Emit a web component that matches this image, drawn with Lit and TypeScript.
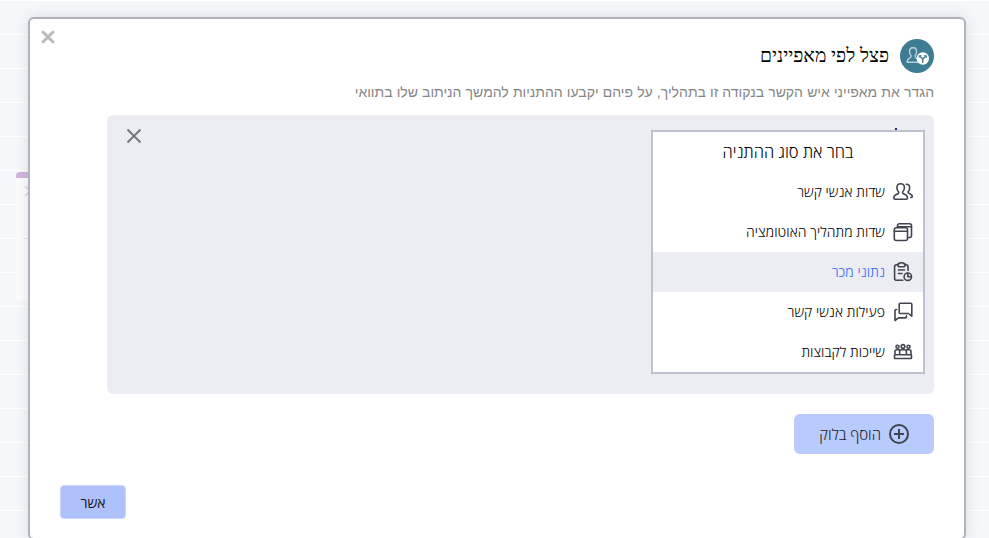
import { LitElement, html, css, svg } from "lit";
import { customElement, state } from "lit/decorators.js";
import { classMap } from "lit/directives/class-map.js";

const contacts = svg`<path d="M7.6 1.800c-2.300 0-3.700 1.600-3.700 3.900 0 1.600.6 3.100 1.600 4.100.4.800.2 1.600-.6 2L2.400 13C1 13.700.8 15 .9 16.300c0 .6.4.9 1 .9h11.600c.6 0 1-.3 1-.9 0-1.300-.2-2.600-1.600-3.300l-2.500-1.200c-.8-.4-1-1.200-.6-2 1-1 1.600-2.500 1.600-4.100 0-2.300-1.400-3.900-3.800-3.900z"/><path d="M13.200 2.200c2.200-.2 3.500 1.400 3.500 3.600 0 1.500-.5 2.800-1.400 3.700-.4.7-.2 1.300.4 1.700l2 1.100c1.200.6 1.600 1.300 1.600 2.500-.2.500-.9.700-1.700.7"/>`;
const windows = svg`<rect x="1.300" y="5.700" width="13.200" height="12.800" rx="2"/><path d="M1.300 9.200h13.200M4.500 5.500V3.800c0-1.200.8-2 2-2h10c1.200 0 2 .8 2 2v9.700c0 1.200-.8 2-2 2h-1.800M5 4.800h13"/>`;
const clipboard = svg`<path d="M5 2.800H3.600c-1.200 0-2 .8-2 2v11.400c0 1.200.8 2 2 2h6.200M12 2.800h1c1.200 0 2 .8 2 2V8.500"/><path d="M6 1.800c.4-1.500 4.500-1.500 5 0h1v2c0 .7-.4 1-1 1H6c-.6 0-1-.3-1-1v-2zM5.500 8h6M5.500 11.500h3.500"/><circle cx="14.800" cy="14.700" r="3.700"/><path d="M14.800 11.200v3.500h3.500"/>`;
const chat = svg`<path d="M7.200 1.200h10.600c.6 0 1 .4 1 1v12l-3.300-2.700H7.200c-.6 0-1-.4-1-1V2.200c0-.6.4-1 1-1z"/><path d="M3.700 7.500H2.900c-.5 0-.9.4-.9 1v10l3.400-2.600h7.100c.5 0 .9-.4.9-1v-1"/>`;
const groups = svg`<circle cx="4.500" cy="4.700" r="1.500"/><circle cx="10" cy="4.400" r="1.800"/><circle cx="15.500" cy="4.700" r="1.500"/><path d="M2 12V9.500C2 8.300 2.800 7.800 4 7.800h2.300M6.600 12V9.500C6.600 8.200 7.300 7.800 8.500 7.800h3c1.200 0 1.900.4 1.900 1.700V12M13.700 7.800H16c1.200 0 2 .5 2 1.700V12"/><rect x="1.500" y="12.700" width="17" height="3.800" rx=".6"/>`;

const options = [
  { icon: contacts, label: "שדות אנשי קשר" },
  { icon: windows, label: "שדות מתהליך האוטומציה" },
  { icon: clipboard, label: "נתוני מכר" },
  { icon: chat, label: "פעילות אנשי קשר" },
  { icon: groups, label: "שייכות לקבוצות" },
];

@customElement("condition-menu")
class ConditionMenu extends LitElement {
  @state() active = 2;

  static styles = css`
    :host { display: block; box-sizing: border-box; width: 274px; height: 244px; background: #fff; border: 2px solid #bfc0d0; font-family: "Open Sans", "Noto Sans", sans-serif; font-weight: 300; }
    .title { height: 40px; line-height: 40px; text-align: center; font-size: 16.5px; color: #000; }
    .row { display: flex; align-items: center; gap: 8px; height: 40px; padding-right: 10px; font-size: 14px; letter-spacing: .06px; color: #000; cursor: pointer; white-space: nowrap; }
    .row span { line-height: 18px; }
    .active { background: #ecedf3; color: #2f68f5; }
    svg { width: 20px; height: 20px; fill: none; stroke: #424550; stroke-width: 1.600; stroke-linejoin: round; stroke-linecap: round; }
  `;

  render() {
    return html`
      <div class="title">בחר את סוג ההתניה</div>
      ${options.map((o, i) => html`
        <div class=${classMap({ row: true, active: i === this.active })} @click=${() => (this.active = i)}>
          <svg viewBox="0 0 20 20">${o.icon}</svg><span>${o.label}</span>
        </div>`)}
    `;
  }
}

@customElement("app-root")
class AppRoot extends LitElement {
  static styles = css`
    :host { display: block; position: relative; direction: rtl; box-sizing: border-box; width: 989px; height: 538px; overflow: hidden; padding: 17px 23px 0 28px; background: repeating-linear-gradient(#fff 0 1px, #f6f7fa 1px 34px); font-family: "Open Sans", "Noto Sans", sans-serif; }
    .node { position: absolute; left: 16px; top: 172px; width: 90px; height: 129px; border-radius: 4px; background: #fcfcfd; overflow: hidden; direction: ltr; }
    .node .bar { height: 6px; background: #d2b5dc; }
    .node svg { display: block; margin: 8px 0 0 9px; width: 10px; height: 10px; stroke: #d4d4d8; stroke-width: 1.5; }
    .node .line { height: 1px; margin: 42px 0 0 7px; background: #e5e6e9; }
    .modal { position: relative; box-sizing: border-box; height: 523px; border: 2px solid #b0b2bc; border-radius: 6px; background: #fff; padding: 20px 30px 0 30px; box-shadow: 0 0 14px rgba(90, 95, 130, .17); }
    .close { position: absolute; left: 11px; top: 11px; width: 14px; height: 14px; stroke: #bcbcbc; stroke-width: 3; }
    .head { display: flex; align-items: center; gap: 11px; height: 34px; }
    .badge { width: 34px; height: 34px; }
    h1 { margin: 0; font-family: "Liberation Serif", "Times New Roman", serif; font-size: 19.200px; line-height: 30px; font-weight: 400; color: #000; }
    .desc { margin: 9px 0 0; height: 20px; line-height: 20px; font-size: 14px; word-spacing: .25px; color: #858585; font-family: "Liberation Sans", Arial, sans-serif; white-space: nowrap; }
    .panel { position: relative; margin-top: 13px; width: 827px; height: 279px; border-radius: 6px; background: #ecedf3; }
    .dot { position: absolute; right: 37px; top: 13px; width: 2px; height: 3px; background: #28287c; }
    .remove { position: absolute; left: 20px; top: 14px; width: 14px; height: 14px; stroke: #767780; stroke-width: 2; }
    condition-menu { position: absolute; right: 9px; top: 15px; }
    button { display: flex; align-items: center; font-family: inherit; }
    .add { box-sizing: border-box; width: 140px; height: 40px; margin-top: 20px; padding: 0 24px 0 0; gap: 7px; border: 0; border-radius: 6px; background: #b9cafc; color: #1c1e26; font-size: 15px; font-weight: 300; }
    .add span { padding-bottom: 1px; }
    .add svg { width: 22px; height: 22px; fill: none; stroke: #3f434d; stroke-width: 2; }
    .foot { display: flex; justify-content: flex-end; margin-top: 31px; }
    .ok { box-sizing: border-box; width: 66px; height: 34px; justify-content: center; border: 1px solid #c9d6fc; border-radius: 4px; background: #afc1fb; color: #161616; font-size: 14px; padding: 0; }
  `;

  render() {
    return html`
      <div class="node"><div class="bar"></div><svg viewBox="0 0 10 10"><path d="M0 0 10 10M10 0 0 10"/></svg><div class="line"></div></div>
      <div class="modal">
        <svg class="close" viewBox="0 0 14 14"><path d="M1.200 1.200 12.800 12.800M12.800 1.200 1.200 12.800"/></svg>
        <div class="head">
          <svg class="badge" viewBox="0 0 34 34">
            <circle cx="17" cy="17" r="17" fill="#3d7c93"/>
            <path d="M13 8.800c-2.300 0-3.500 1.500-3.500 3.600 0 1.700.6 3 1.500 4 .2 1.400 0 2-1 2.500-1.800.7-2.700 1.200-2.700 4.300h11.500c0-3.100-.9-3.600-2.700-4.300-1-.5-1.200-1.100-1-2.500.9-1 1.500-2.300 1.500-4 0-2.100-1.300-3.600-3.600-3.600z" fill="none" stroke="#b8d0da" stroke-width="1.400"/>
            <circle cx="22.800" cy="19.500" r="6.200" fill="#fff"/>
            <path d="M22.800 23.800v-3.800M19.800 17.200l3 2.800 3-2.800" fill="none" stroke="#3d7c93" stroke-width="1.500"/>
            <path d="M19.200 18.800v-2.200h2.200M26.400 18.800v-2.200h-2.200" fill="none" stroke="#3d7c93" stroke-width="1"/>
          </svg>
          <h1>פצל לפי מאפיינים</h1>
        </div>
        <p class="desc">הגדר את מאפייני איש הקשר בנקודה זו בתהליך, על פיהם יקבעו ההתניות להמשך הניתוב שלו בתוואי</p>
        <div class="panel">
          <i class="dot"></i>
          <svg class="remove" viewBox="0 0 14 14"><path d="M.5.5l13 13M13.500.5l-13 13"/></svg>
          <condition-menu></condition-menu>
        </div>
        <button class="add"><svg viewBox="0 0 22 22"><circle cx="11" cy="11" r="9"/><path d="M11 6v10M6 11h10"/></svg><span>הוסף בלוק</span></button>
        <div class="foot"><button class="ok">אשר</button></div>
      </div>
    `;
  }
}
